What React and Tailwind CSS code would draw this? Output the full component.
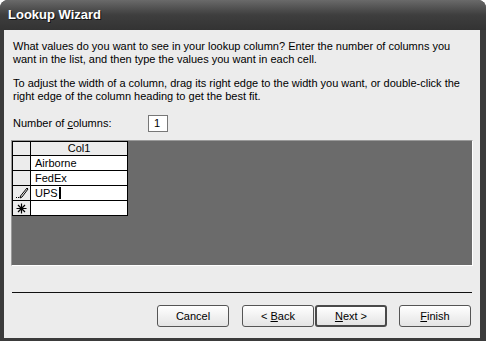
import React from 'react';

const body = { fontFamily: '"Liberation Sans", Arial, sans-serif' };

function Pencil() {
  return (
    <svg width="14" height="12" viewBox="0 0 14 12">
      <path d="M12 1 L13 2 L7 10 L5 11 L5.5 9 Z" fill="none" stroke="#000" strokeWidth="1" />
      <rect x="1" y="10" width="1" height="1" fill="#000" />
      <rect x="3" y="10" width="1" height="1" fill="#000" />
    </svg>
  );
}

function Star() {
  return (
    <svg width="11" height="11" viewBox="0 0 11 11">
      <path d="M5.5 0.5 V10.5 M0.5 5.5 H10.5 M2 2 L9 9 M9 2 L2 9" stroke="#000" strokeWidth="1.2" />
    </svg>
  );
}

function Btn({ children, isDefault }) {
  return (
    <button
      className={`h-[22px] w-[72px] rounded-[3px] bg-gradient-to-b from-[#ffffff] to-[#e4e4e4] text-[11px] text-black ${
        isDefault ? 'border-2 border-[#4a4a4a]' : 'border border-[#555]'
      }`}
      style={body}
    >
      {children}
    </button>
  );
}

export default function App() {
  const rows = [
    { sel: null, val: 'Airborne' },
    { sel: null, val: 'FedEx' },
    { sel: 'edit', val: 'UPS' },
    { sel: 'new', val: '' },
  ];

  return (
    <div className="w-[486px] h-[341px] bg-white">
      <div className="w-full h-full flex flex-col rounded-t-[8px] bg-[#3b3b3b] overflow-hidden">
        {/* Title bar */}
        <div className="h-[30px] flex items-center pl-[8px] bg-gradient-to-b from-[#6a6a6a] via-[#3e3e3e] to-[#333333]">
          <span
            className="text-white text-[13px] font-bold [text-shadow:1px_1px_0_#111]"
            style={body}
          >
            Lookup Wizard
          </span>
        </div>

        {/* Client area */}
        <div
          className="flex-1 ml-[4px] mr-[6px] mb-[3px] bg-[#ececec] flex flex-col pl-[9px] pr-[8px] text-[11px] text-black leading-[13px]"
          style={body}
        >
          <p className="mt-[10px]">
            What values do you want to see in your lookup column? Enter the number of columns you
            <br />
            want in the list, and then type the values you want in each cell.
          </p>
          <p className="mt-[11px]">
            To adjust the width of a column, drag its right edge to the width you want, or double-click the
            <br />
            right edge of the column heading to get the best fit.
          </p>

          <div className="mt-[12px] flex items-center h-[17px]">
            <span className="w-[135px]">
              Number of <span className="underline">c</span>olumns:
            </span>
            <div className="w-[20px] h-[17px] border border-[#777] bg-white flex items-center pl-[5px]">1</div>
          </div>

          {/* Grid */}
          <div className="mt-[8px] -ml-[2px] w-[462px] h-[126px] bg-[#6b6b6b] border-t border-l border-[#9a9a9a] border-b border-r border-b-white border-r-white">
            <div className="w-[116px] bg-white">
              <div className="flex h-[15px] bg-[#ececec] border border-black">
                <div className="w-[18px] border-r border-black" />
                <div className="flex-1 text-center leading-[13px]">Col1</div>
              </div>
              {rows.map((r, i) => (
                <div key={i} className="flex h-[15px] border-x border-b border-black">
                  <div className="w-[18px] bg-[#ececec] border-r border-black flex items-center justify-center">
                    {r.sel === 'edit' && <Pencil />}
                    {r.sel === 'new' && <Star />}
                  </div>
                  <div className="flex-1 bg-white pl-[4px] flex items-center">
                    {r.val}
                    {r.sel === 'edit' && <span className="ml-[1px] w-[2px] h-[12px] bg-black" />}
                  </div>
                </div>
              ))}
            </div>
          </div>

          {/* Separator */}
          <div className="mt-[26px] -ml-[1px] w-[460px] h-px bg-[#111]" />

          {/* Buttons */}
          <div className="mt-[12px] flex pl-[144px]">
            <Btn>Cancel</Btn>
            <div className="ml-[13px] flex">
              <Btn>
                &lt; <span className="underline">B</span>ack
              </Btn>
              <div className="ml-px">
                <Btn isDefault>
                  <span className="underline">N</span>ext &gt;
                </Btn>
              </div>
            </div>
            <div className="ml-[12px]">
              <Btn>
                <span className="underline">F</span>inish
              </Btn>
            </div>
          </div>
        </div>
      </div>
    </div>
  );
}
